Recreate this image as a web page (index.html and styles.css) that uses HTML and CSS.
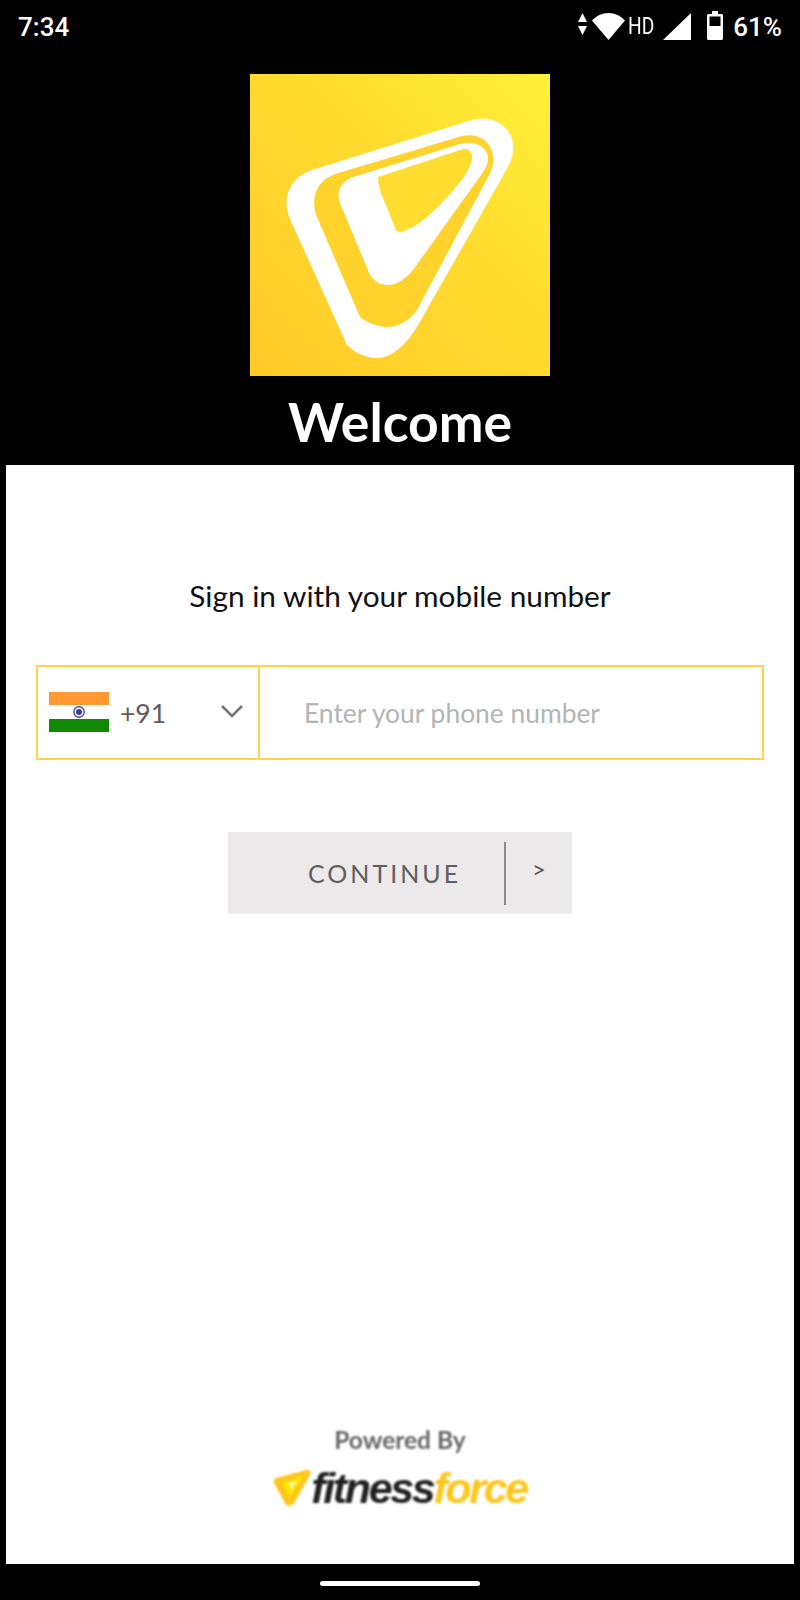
FILE: index.html
```html
<!DOCTYPE html>
<html lang="en">
<head>
  <meta charset="UTF-8" />
  <meta name="viewport" content="width=device-width, initial-scale=1.0"/>
  <title>Welcome</title>
  <link rel="stylesheet" href="styles.css">
</head>
<body>

  <header class="status-bar">
    <span class="jam">7:34</span>
    <div class="status-icons">
      <svg class="ic-data" viewBox="0 0 9 22"><path d="M4.5 0L9 9H0ZM0 13H9L4.5 22Z" fill="#fff"/></svg>
      <svg class="ic-wifi" viewBox="0 0 33 27"><path d="M16.5 27L0 7.5C4 3 10 0 16.5 0S29 3 33 7.5Z" fill="#fff"/></svg>
      <span class="hd">HD</span>
      <svg class="ic-signal" viewBox="0 0 28 27"><path d="M28 0V27H0Z" fill="#fff"/></svg>
      <svg class="ic-battery" viewBox="0 0 16 29"><path fill-rule="evenodd" d="M5 0H11V3H14.5C15.3 3 16 3.7 16 4.5V27.5C16 28.3 15.3 29 14.5 29H1.5C.7 29 0 28.3 0 27.5V4.5C0 3.7.7 3 1.5 3H5ZM2.5 5.5V15H13.5V5.5Z" fill="#fff"/></svg>
      <span class="persen">61%</span>
    </div>
  </header>

  <section class="brand">
    <svg class="logo" viewBox="0 0 300 302">
      <defs>
        <linearGradient id="kuning" x1="0" y1="1" x2="1" y2="0">
          <stop offset="0" stop-color="#ffca28"/>
          <stop offset="0.6" stop-color="#ffdc30"/>
          <stop offset="1" stop-color="#fff238"/>
        </linearGradient>
      </defs>
      <rect width="300" height="302" fill="url(#kuning)"/>
      <path d="M225 45C248 41 266 57 263 78C262 86 258 93 254 100L167 253C155 272 141 284 127 284C115 284 104 278 97 271L41 147C30 125 40 103 62 96Z" fill="#fff"/>
      <path d="M212 62C230 58 245 70 243 88C243 93 241 98 238 103L167 236C158 248 148 253 137 253C128 253 118 249 110 243L67 143C60 125 66 107 85 100Z" fill="#ffd22c"/>
      <path d="M103 103L210 70C224 66 238 72 238 85C238 90 235 96 231 101L163 196C155 205 147 211 137 211C130 211 124 207 120 201L90 129C86 119 90 108 103 103Z" fill="#fff"/>
      <path d="M128 103L213 75C219 74 223 79 222 85C220 96 212 106 205 114C190 132 168 155 150 158C148 158 147 157 146 156L133 124C130 117 128 110 128 103Z" fill="#ffdc30"/>
    </svg>
    <h1>Welcome</h1>
  </section>

  <main class="panel">
    <h2>Sign in with your mobile number</h2>

    <form class="phone-group">
      <div class="country">
        <svg class="flag" viewBox="0 0 60 40">
          <rect width="60" height="40" fill="#fff"/>
          <rect width="60" height="13" fill="#ff9933"/>
          <rect y="27" width="60" height="13" fill="#128807"/>
          <circle cx="30" cy="20" r="5.2" fill="none" stroke="#4a4aa8" stroke-width="1.4"/>
          <circle cx="30" cy="20" r="3" fill="#3c3c9c"/>
        </svg>
        <span class="kode">+91</span>
        <svg class="chevron" viewBox="0 0 24 14"><path d="M2 2L12 12L22 2" fill="none" stroke="#757575" stroke-width="2.6"/></svg>
      </div>
      <input type="text" class="phone-input" placeholder="Enter your phone number" />
    </form>

    <button type="button" class="btn-continue">
      <span class="btn-label">CONTINUE</span>
      <span class="btn-arrow">&gt;</span>
    </button>

    <footer class="powered">
      <p>Powered By</p>
      <div class="ff-logo">
        <svg class="ff-mark" viewBox="0 0 38 38">
          <path d="M3 9L33 1C37 0 38 3 37 6L21 34C18 38 14 38 12 34L1 14C0 12 1 10 3 9Z" fill="#ffc61a"/>
          <path d="M9 13L30 7L17 29Z" fill="#ffe600"/>
          <path d="M16 14L24 12L18 21Z" fill="#fff6b0"/>
        </svg>
        <span class="ff-text">fitness<b>force</b></span>
      </div>
    </footer>
  </main>

  <div class="nav-bar"><span class="pill"></span></div>

</body>
</html>
```

FILE: styles.css
```css
* {
  margin: 0;
  padding: 0;
  box-sizing: border-box;
}

body {
  background-color: #000;
  width: 800px;
  height: 1600px;
  font-family: 'Lato', sans-serif;
  display: flex;
  flex-direction: column;
  overflow: hidden;
}

.status-bar {
  height: 74px;
  flex: none;
  display: flex;
  justify-content: space-between;
  align-items: flex-start;
  padding: 11px 18px 0 18px;
  color: white;
  font-family: 'Roboto', sans-serif;
  font-weight: 500;
}

.jam {
  font-size: 26px;
  line-height: 33px;
}

.status-icons {
  display: flex;
  align-items: flex-start;
}

.ic-data {
  width: 9px;
  height: 22px;
  margin-top: 2px;
}

.ic-wifi {
  width: 33px;
  height: 27px;
  margin: 2px 0 0 5px;
}

.hd {
  font-size: 24px;
  line-height: 30px;
  font-weight: 400;
  width: 27px;
  margin-left: 3px;
  transform: scaleX(0.8);
  transform-origin: left;
  white-space: nowrap;
}

.ic-signal {
  width: 28px;
  height: 27px;
  margin: 2px 0 0 8px;
}

.ic-battery {
  width: 16px;
  height: 29px;
  margin: 0 0 0 16px;
}

.persen {
  font-size: 26px;
  line-height: 33px;
  margin-left: 10px;
}

.brand {
  height: 391px;
  flex: none;
  display: flex;
  flex-direction: column;
  align-items: center;
}

.logo {
  width: 300px;
  height: 302px;
  display: block;
}

.brand h1 {
  color: white;
  font-size: 53.5px;
  line-height: 68px;
  font-weight: 700;
  margin-top: 11px;
}

.panel {
  background-color: white;
  height: 1099px;
  margin: 0 6px;
  flex: none;
  display: flex;
  flex-direction: column;
  align-items: center;
  padding-top: 112px;
}

.panel h2 {
  font-size: 29.8px;
  line-height: 38px;
  font-weight: 400;
  color: #111;
}

.phone-group {
  width: 728px;
  height: 95px;
  margin-top: 50px;
  border: 2px solid #ffd54f;
  display: flex;
}

.country {
  width: 222px;
  flex: none;
  border-right: 2px solid #ffd54f;
  display: flex;
  align-items: center;
  padding-left: 11px;
}

.flag {
  width: 60px;
  height: 40px;
  margin-bottom: 2px;
}

.kode {
  font-size: 26.5px;
  color: #5c5c5c;
  margin-left: 11px;
}

.chevron {
  width: 24px;
  height: 14px;
  margin-left: auto;
  margin-right: 14px;
  margin-bottom: 3px;
}

.phone-input {
  flex: 1;
  border: none;
  outline: none;
  padding-left: 44px;
  font-family: 'Lato', sans-serif;
  font-size: 26.4px;
  color: #333;
  background: transparent;
}

.phone-input::placeholder {
  color: #b4b4b4;
  opacity: 1;
}

.btn-continue {
  width: 344px;
  height: 82px;
  margin-top: 72px;
  background-color: #ebe9ea;
  border: none;
  display: flex;
  align-items: center;
  font-family: 'Lato', sans-serif;
  color: #5f5f5f;
}

.btn-label {
  width: 278px;
  height: 63px;
  line-height: 63px;
  padding-left: 80px;
  text-align: left;
  font-size: 25px;
  letter-spacing: 3px;
  border-right: 2px solid #8a8a8a;
}

.btn-arrow {
  font-size: 24px;
  margin-left: 26px;
  margin-bottom: 10px;
  color: #555;
}

.powered {
  margin-top: auto;
  margin-bottom: 56px;
  display: flex;
  flex-direction: column;
  align-items: center;
  filter: blur(0.9px);
}

.powered p {
  font-size: 24.5px;
  line-height: 32px;
  color: #666;
  font-weight: 700;
}

.ff-logo {
  display: flex;
  align-items: center;
  margin-top: 12px;
}

.ff-mark {
  width: 38px;
  height: 38px;
}

.ff-text {
  font-family: 'Liberation Sans', sans-serif;
  font-style: italic;
  font-weight: 700;
  font-size: 43px;
  line-height: 40px;
  letter-spacing: -2.35px;
  color: #222;
}

.ff-text b {
  color: #ffc61a;
}

.nav-bar {
  flex: 1;
  display: flex;
  justify-content: center;
  padding-top: 17px;
}

.pill {
  width: 160px;
  height: 5px;
  border-radius: 3px;
  background-color: white;
}
```
